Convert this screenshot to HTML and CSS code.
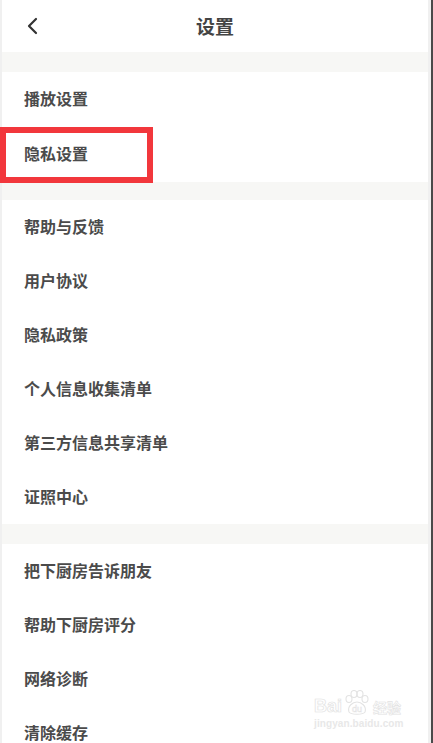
FILE: index.html
```html
<!DOCTYPE html>
<html lang="zh">
<head>
    <meta charset="UTF-8">
    <meta name="viewport" content="width=device-width, initial-scale=1.0">
    <title>设置</title>
    <link rel="stylesheet" href="styles.css">
</head>
<body>
    <div class="phone">
        <div class="header">
            <span class="back">
                <svg width="14" height="18" viewBox="0 0 14 18">
                    <path d="M10 2 L3 9 L10 16" fill="none" stroke="#333" stroke-width="2.2" stroke-linecap="round" stroke-linejoin="round"/>
                </svg>
            </span>
            <h1 class="title">设置</h1>
        </div>

        <div class="gap"></div>
        <div class="section first">
            <div class="row">播放设置</div>
            <div class="row marked">隐私设置</div>
        </div>

        <div class="gap short"></div>
        <div class="section">
            <div class="row">帮助与反馈</div>
            <div class="row">用户协议</div>
            <div class="row">隐私政策</div>
            <div class="row">个人信息收集清单</div>
            <div class="row">第三方信息共享清单</div>
            <div class="row">证照中心</div>
        </div>

        <div class="gap"></div>
        <div class="section">
            <div class="row">把下厨房告诉朋友</div>
            <div class="row">帮助下厨房评分</div>
            <div class="row">网络诊断</div>
            <div class="row">清除缓存</div>
        </div>
    </div>

    <!-- watermark -->
    <div class="watermark">
        <div class="wm-top">
            <span class="wm-word">Bai</span>
            <svg class="wm-paw" width="28" height="26" viewBox="0 0 28 26">
                <g fill="none" stroke="#e3e3e3" stroke-width="1.1">
                    <ellipse cx="6" cy="9" rx="3" ry="3.5"/>
                    <ellipse cx="11" cy="4" rx="3" ry="3.5"/>
                    <ellipse cx="17" cy="4" rx="3" ry="3.5"/>
                    <ellipse cx="22" cy="9" rx="3" ry="3.5"/>
                    <path d="M6 22 C4 16 10 12 14 12 C18 12 24 16 22 22 C20 25 8 25 6 22 Z"/>
                </g>
                <text x="14" y="22" text-anchor="middle" font-size="9" font-family="Liberation Sans, sans-serif" fill="none" stroke="#e3e3e3" stroke-width="0.5">du</text>
            </svg>
            <span class="wm-cn">经验</span>
        </div>
        <div class="wm-url">jingyan.baidu.com</div>
    </div>
</body>
</html>
```

FILE: styles.css
```css
body {
  margin: 0;
  padding: 0;
  background-color: #f0f0f0;
  border-right: 2px solid #4a4a4a;
  height: 743px;
  overflow: hidden;
  font-family: "Noto Sans CJK SC", "Noto Sans", sans-serif;
}
.phone {
  margin: 0 3px 0 2px;
  background-color: #f7f7f5;
  height: 743px;
}
.header {
  height: 52px;
  background-color: #fff;
  display: flex;
  align-items: center;
  justify-content: center;
  position: relative;
}
.back {
  position: absolute;
  left: 24px;
  top: 17px;
  display: flex;
}
.title {
  margin: 0 0 2px;
  font-size: 19px;
  font-weight: 700;
  color: #444;
}
.gap {
  height: 20px;
}
.gap.short {
  height: 18px;
}
.section {
  background-color: #fff;
}
.row {
  height: 54px;
  box-sizing: border-box;
  padding-bottom: 3px;
  display: flex;
  align-items: center;
  padding-left: 22px;
  font-size: 16px;
  font-weight: 700;
  color: #4b4b4b;
}
.section.first .row {
  height: 55px;
}
.row.marked {
  position: relative;
}
.row.marked::after {
  content: "";
  position: absolute;
  left: -2px;
  top: 0;
  width: 141px;
  height: 44px;
  border: 6px solid #f2373c;
}
.watermark {
  position: absolute;
  left: 314px;
  top: 688px;
  width: 95px;
  font-family: "Liberation Sans", sans-serif;
}
.wm-top {
  display: flex;
  align-items: flex-end;
  height: 28px;
}
.wm-word {
  font-size: 18px;
  font-weight: 700;
  color: transparent;
  -webkit-text-stroke: 0.7px #e2e2e2;
  line-height: 18px;
  padding-bottom: 1px;
}
.wm-paw {
  display: block;
  margin-left: 1px;
}
.wm-cn {
  font-family: "Noto Sans CJK SC", sans-serif;
  font-size: 14px;
  font-weight: 700;
  color: transparent;
  -webkit-text-stroke: 0.6px #e2e2e2;
  line-height: 18px;
  margin-left: 2px;
}
.wm-url {
  font-size: 10px;
  font-weight: 700;
  color: #e8e8e8;
  letter-spacing: 0.1px;
  margin-top: 2px;
}
```
